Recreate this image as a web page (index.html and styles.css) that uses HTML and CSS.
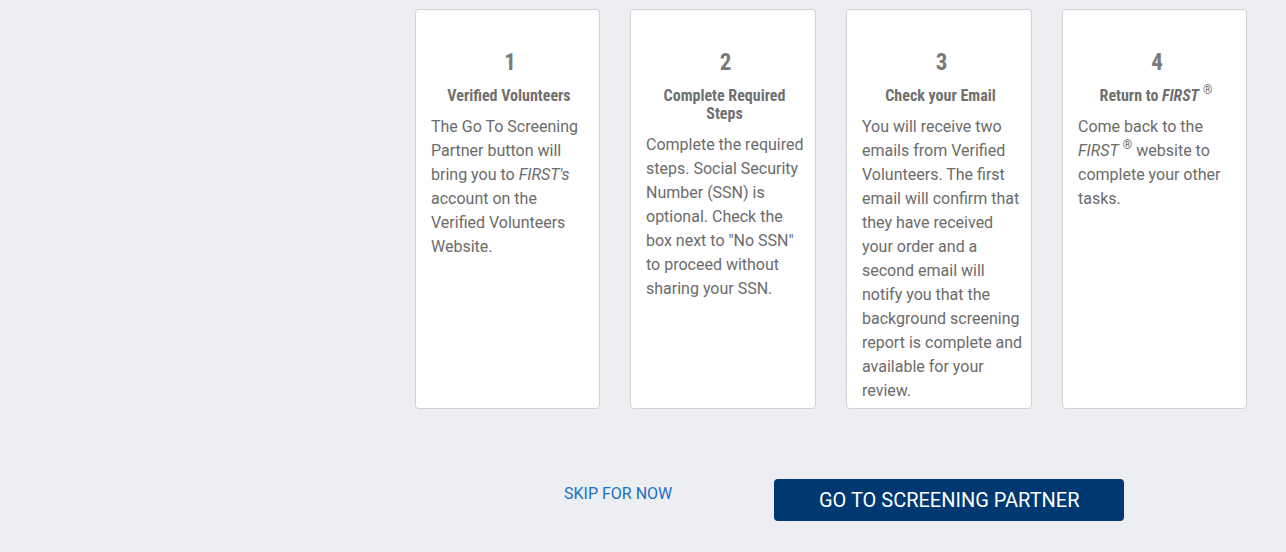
FILE: index.html
```html
<!DOCTYPE html>
<html>
<head>
<meta charset="utf-8">
<link rel="stylesheet" href="styles.css">
</head>
<body>
<div class="page">
  <div class="steps">
    <div class="card">
      <div class="num">1</div>
      <div class="title">Verified Volunteers</div>
      <p class="text">The Go To Screening Partner button will bring you to <i>FIRST's</i> account on the Verified Volunteers Website.</p>
    </div>
    <div class="card">
      <div class="num">2</div>
      <div class="title">Complete Required Steps</div>
      <p class="text">Complete the required steps. Social Security Number (SSN) is optional. Check the box next to "No SSN" to proceed without sharing your SSN.</p>
    </div>
    <div class="card">
      <div class="num">3</div>
      <div class="title">Check your Email</div>
      <p class="text">You will receive two emails from Verified Volunteers. The first email will confirm that they have received your order and a second email will notify you that the background screening report is complete and available for your review.</p>
    </div>
    <div class="card">
      <div class="num">4</div>
      <div class="title">Return to <i>FIRST</i><sup>®</sup></div>
      <p class="text">Come back to the <i>FIRST</i><sup>®</sup> website to complete your other tasks.</p>
    </div>
  </div>
  <div class="actions">
    <a class="skip" href="#">SKIP FOR NOW</a>
    <button class="go">GO TO SCREENING PARTNER</button>
  </div>
</div>
</body>
</html>
```
FILE: styles.css
```css
html, body {
  margin: 0;
  padding: 0;
  background: #eceef1;
  font-family: Roboto, "Liberation Sans", sans-serif;
}
.page {
  padding: 9px 0 0 415px;
  width: 832px;
}
.steps {
  display: flex;
  gap: 30px;
}
.card {
  box-sizing: border-box;
  width: 185px;
  height: 400px;
  background: #fff;
  border: 1px solid #cfd1d4;
  border-radius: 4px;
  padding: 38px 6px 0 15px;
  text-align: center;
}
.card:nth-child(2), .card:nth-child(3) { width: 186px; }
.num {
  font-size: 23px;
  font-weight: 700;
  color: #7a7a7a;
  line-height: 30px;
  font-family: "Roboto Condensed", Roboto, sans-serif;
  padding-right: 4px;
}
.title {
  margin-top: 9px;
  font-family: "Roboto Condensed", Roboto, sans-serif;
  font-weight: 700;
  font-size: 16px;
  line-height: 18px;
  color: #707070;
  padding: 0 7px 0 1px;
}
.title sup, .text sup {
  font-weight: 400;
  font-size: 12px;
  line-height: 0;
  vertical-align: 0;
  position: relative;
  top: -7px;
  margin-left: 4px;
}
.text {
  margin: 10px 0 0;
  text-align: left;
  font-size: 16px;
  line-height: 24px;
  color: #6b6b6b;
}
.actions {
  display: flex;
  align-items: center;
  margin-top: 70px;
}
.skip {
  margin-left: 149px;
  color: #1a6fc9;
  text-decoration: none;
  font-size: 16px;
  margin-top: -14px;
}
.go {
  margin-left: 102px;
  width: 350px;
  height: 42px;
  background: #003872;
  color: #fff;
  border: none;
  border-radius: 4px;
  font-family: Roboto, sans-serif;
  font-size: 20px;
  padding: 0;
}
```
